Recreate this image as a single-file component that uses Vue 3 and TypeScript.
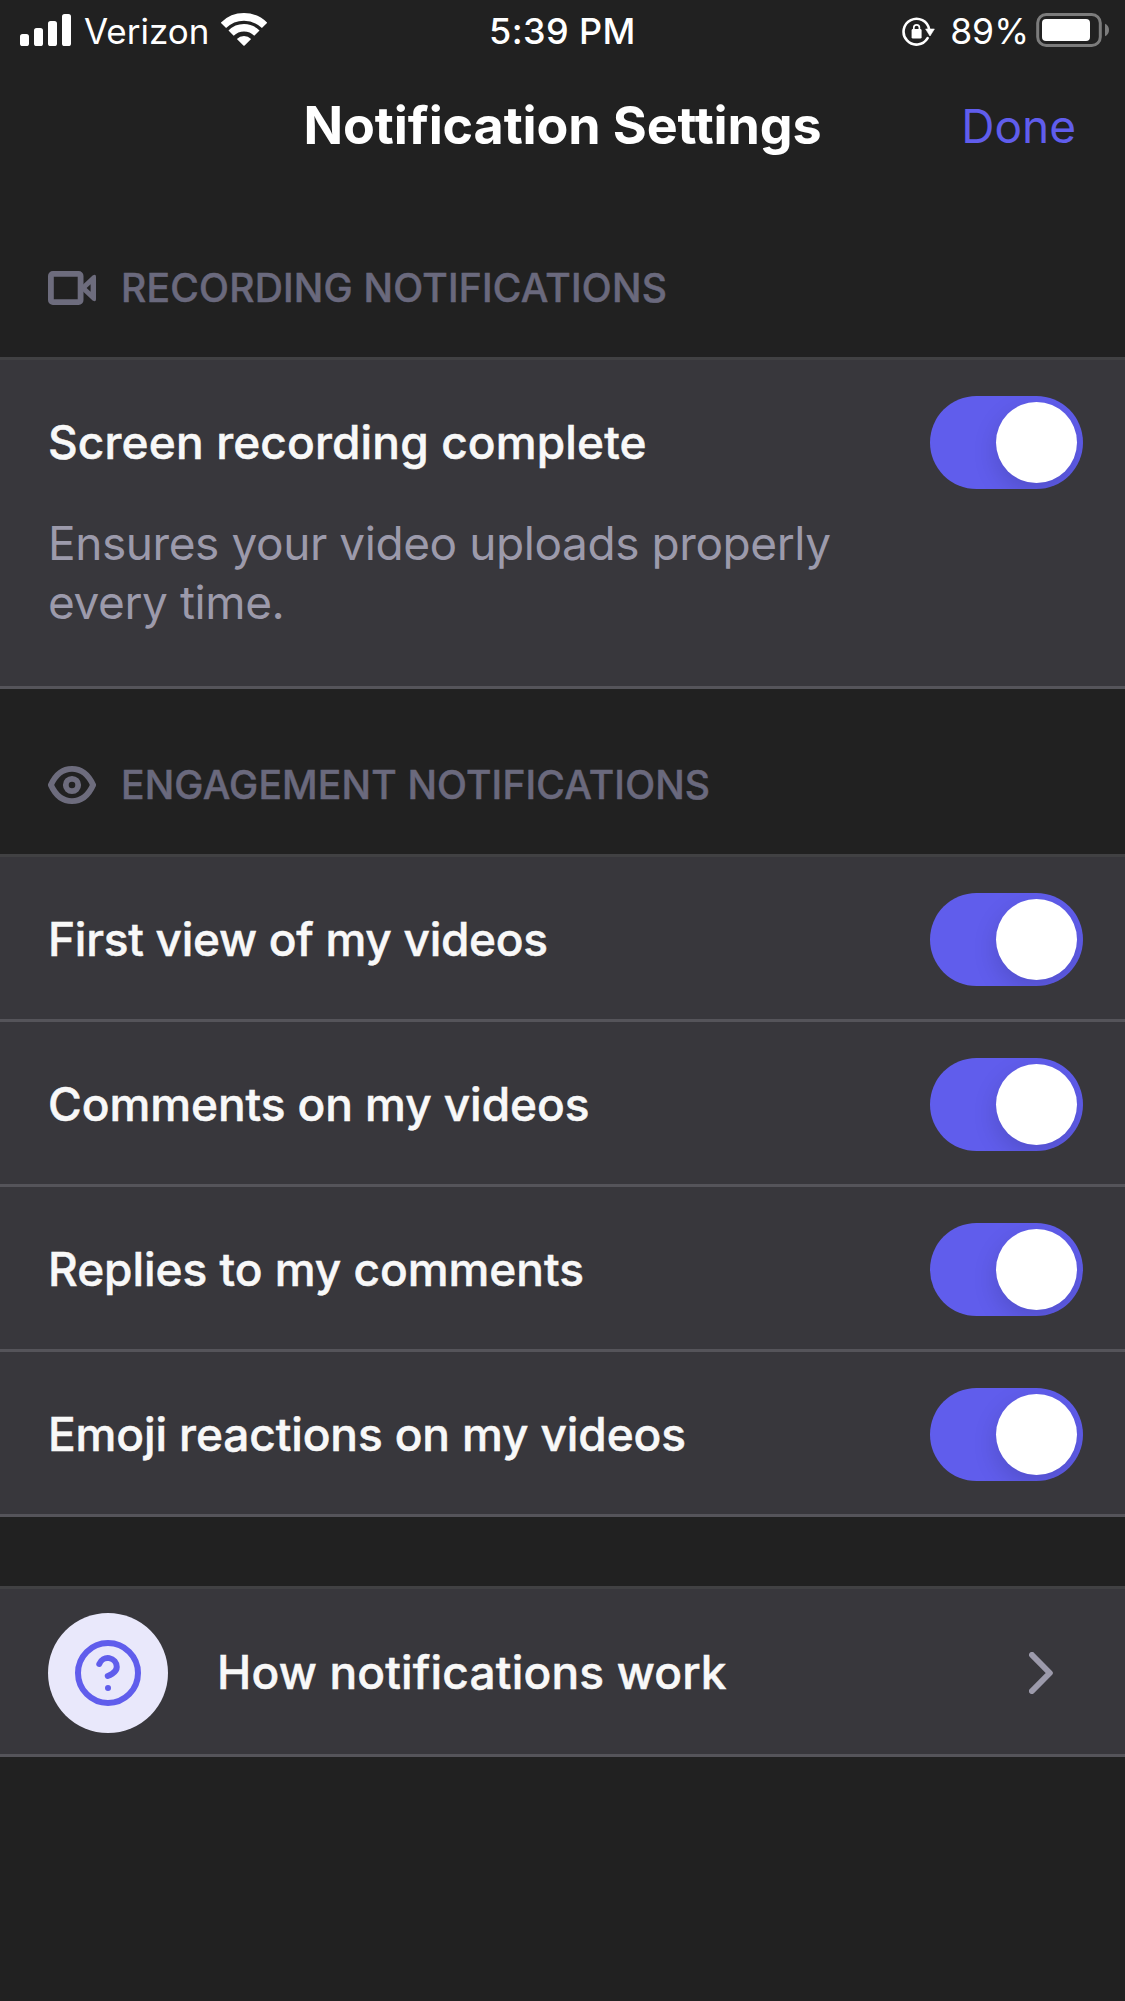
<script setup lang="ts">
import { ref } from 'vue'

interface Setting {
  label: string
  tracking: number
  enabled: boolean
  description?: string
}

interface Section {
  id: 'recording' | 'engagement'
  title: string
  tracking: number
  settings: Setting[]
}

const sections = ref<Section[]>([
  {
    id: 'recording',
    title: 'RECORDING NOTIFICATIONS',
    tracking: 0.22,
    settings: [
      {
        label: 'Screen recording complete',
        tracking: 0.14,
        enabled: true,
        description: 'Ensures your video uploads properly every time.',
      },
    ],
  },
  {
    id: 'engagement',
    title: 'ENGAGEMENT NOTIFICATIONS',
    tracking: 0.17,
    settings: [
      { label: 'First view of my videos', tracking: -0.28, enabled: true },
      { label: 'Comments on my videos', tracking: -0.07, enabled: true },
      { label: 'Replies to my comments', tracking: -0.04, enabled: true },
      { label: 'Emoji reactions on my videos', tracking: -0.12, enabled: true },
    ],
  },
])

const signalBars = [
  { x: 0, height: 12 },
  { x: 14, height: 18 },
  { x: 28, height: 25 },
  { x: 42, height: 32 },
]
</script>

<template>
  <main class="screen">
    <header class="status">
      <div class="status-left">
        <svg class="signal" width="51" height="32" viewBox="0 0 51 32">
          <rect
            v-for="bar in signalBars"
            :key="bar.x"
            :x="bar.x"
            :y="32 - bar.height"
            width="9"
            :height="bar.height"
            rx="2.6"
            fill="#fff"
          />
        </svg>
        <span class="carrier">Verizon</span>
        <svg class="wifi" width="46" height="34" viewBox="0 0 46 34" fill="none">
          <path d="M2.4 12.4A29.2 29.2 0 0 1 43.6 12.4" stroke="#fff" stroke-width="7.6" />
          <path d="M10.1 20.1A18.2 18.2 0 0 1 35.9 20.1" stroke="#fff" stroke-width="7.4" />
          <path d="M15.9 25.9A10 10 0 0 1 30.1 25.9L23.6 32.6Q23 33.1 22.4 32.6Z" fill="#fff" />
        </svg>
      </div>
      <span class="time">5:39 PM</span>
      <div class="status-right">
        <svg class="lock" width="33" height="30" viewBox="0 0 33 30" fill="none">
          <path
            d="M27.2 12.6A12.9 12.9 0 1 0 25.6 21.2"
            stroke="#fff"
            stroke-width="2.6"
            stroke-linecap="round"
          />
          <path d="M23.6 12H32.4L28 19Z" fill="#fff" stroke="#fff" stroke-width=".6" stroke-linejoin="round" />
          <rect x="9.6" y="12" width="10" height="9.6" rx="1.4" fill="#fff" />
          <path d="M11.8 13V10.6a2.8 2.8 0 0 1 5.6 0V13" stroke="#fff" stroke-width="1.7" />
        </svg>
        <span class="percent">89%</span>
        <svg class="battery" width="74" height="34" viewBox="0 0 74 34" fill="none">
          <rect x="1.7" y="1.5" width="62.6" height="31" rx="8.5" stroke="#7c7c7c" stroke-width="3" />
          <rect x="6" y="6" width="48" height="22" rx="4" fill="#fff" />
          <path d="M69 10.8c2.6 1 4 3.4 4 6.2s-1.4 5.2-4 6.2z" fill="#7c7c7c" />
        </svg>
      </div>
    </header>

    <nav class="nav">
      <h1 class="title">Notification Settings</h1>
      <a class="done">Done</a>
    </nav>

    <section v-for="section in sections" :key="section.id">
      <div class="heading">
        <svg v-if="section.id === 'recording'" width="48" height="48" viewBox="0 0 48 48" fill="none">
          <rect x="2.9" y="9.9" width="29.7" height="28.2" rx="2" stroke="#6d6c7d" stroke-width="5.8" />
          <path
            fill="#6d6c7d"
            fill-rule="evenodd"
            d="M34 21.5L44.6 11.6Q48 9.6 48 12.8V35.2Q48 38.4 44.6 36.4L34 26.5ZM38.6 24L42.6 27.8V20.2Z"
          />
        </svg>
        <svg v-else width="48" height="48" viewBox="0 0 48 48" fill="none" stroke="#6d6c7d" stroke-linejoin="round">
          <path
            d="M2.9 24C7.4 14 15 7.9 24 7.9S40.6 14 45.1 24C40.6 34 33 40.1 24 40.1S7.4 34 2.9 24Z"
            stroke-width="5.9"
          />
          <circle cx="24" cy="24" r="6.2" stroke-width="5.8" />
        </svg>
        <h2 class="heading-text" :style="{ letterSpacing: section.tracking + 'px' }">{{ section.title }}</h2>
      </div>

      <div class="card">
        <div
          v-for="setting in section.settings"
          :key="setting.label"
          class="row"
          :class="{ described: setting.description }"
        >
          <div class="row-main">
            <span class="label" :style="{ letterSpacing: setting.tracking + 'px' }">{{ setting.label }}</span>
            <button
              class="toggle"
              :class="{ on: setting.enabled }"
              role="switch"
              :aria-checked="setting.enabled"
              @click="setting.enabled = !setting.enabled"
            >
              <span class="knob"></span>
            </button>
          </div>
          <p v-if="setting.description" class="description">{{ setting.description }}</p>
        </div>
      </div>
    </section>

    <div class="card help">
      <div class="help-row">
        <span class="badge">
          <svg
            width="72"
            height="72"
            viewBox="0 0 24 24"
            fill="none"
            stroke="#605dec"
            stroke-width="2"
            stroke-linecap="round"
            stroke-linejoin="round"
          >
            <circle cx="12" cy="12" r="10" />
            <path d="M9.09 9a3 3 0 0 1 5.83 1c0 2-3 3-3 3" />
            <path d="M12 17h.01" />
          </svg>
        </span>
        <span class="label help-label">How notifications work</span>
        <svg class="chevron" width="24" height="42" viewBox="0 0 24 42" fill="none">
          <path
            d="M3 3L20.8 21L3 39"
            stroke="#9c9aab"
            stroke-width="6"
            stroke-linecap="round"
            stroke-linejoin="round"
          />
        </svg>
      </div>
    </div>
  </main>
</template>

<style>
body {
  background: #212121;
}
</style>

<style scoped>
.screen {
  width: 1125px;
  height: 2001px;
  overflow: hidden;
  background: #212121;
  color: #fff;
  font-family: Inter, 'Liberation Sans', sans-serif;
}

svg {
  display: block;
  flex: none;
}

.status {
  box-sizing: border-box;
  height: 61px;
  padding: 0 15px 0 20px;
  display: grid;
  grid-template-columns: 1fr auto 1fr;
  font-size: 36px;
  line-height: 63px;
  white-space: nowrap;
}

.status-left,
.status-right {
  display: flex;
  align-items: flex-start;
}

.status-right {
  justify-content: flex-end;
}

.signal {
  margin-top: 14px;
}

.carrier {
  margin-left: 13px;
  font-size: 35px;
  font-weight: 400;
}

.wifi {
  margin: 13px 0 0 12px;
}

.time {
  margin-right: 5px;
  font-weight: 500;
  letter-spacing: 0.4px;
}

.lock {
  margin-top: 17px;
}

.percent {
  margin-left: 15px;
  font-size: 35.5px;
  font-weight: 400;
}

.battery {
  margin: 13px 0 0 7px;
}

.nav {
  box-sizing: border-box;
  height: 131px;
  padding: 0 49px 2px;
  display: grid;
  grid-template-columns: 1fr auto 1fr;
  align-items: center;
}

.title {
  grid-column: 2;
  margin: 0;
  font-size: 52px;
  font-weight: 700;
  letter-spacing: -0.12px;
  white-space: nowrap;
}

.done {
  justify-self: end;
  color: #605dec;
  font-size: 46px;
}

.heading {
  box-sizing: border-box;
  height: 165px;
  padding: 72px 48px 0;
  display: flex;
  align-items: flex-start;
  gap: 25px;
}

.heading-text {
  margin: 0;
  color: #6a697d;
  font-size: 39px;
  font-weight: 500;
  line-height: 47px;
  white-space: nowrap;
  -webkit-text-stroke: 0.5px currentColor;
}

.card {
  border-top: 3px solid #414143;
  background: #38373c;
}

.row {
  padding: 36px 42px 33px 48px;
  border-bottom: 3px solid #55545a;
}

.row.described {
  padding-bottom: 54px;
}

.row-main {
  display: flex;
  align-items: center;
  justify-content: space-between;
}

.label {
  padding-bottom: 2px;
  color: #f8f8f8;
  font-size: 46px;
  font-weight: 500;
  line-height: 56px;
  white-space: nowrap;
  -webkit-text-stroke: 0.5px currentColor;
}

.description {
  max-width: 800px;
  margin: 25px 0 0;
  color: #9c9aab;
  font-size: 46px;
  line-height: 59px;
  letter-spacing: -0.43px;
}

.toggle {
  box-sizing: border-box;
  width: 153px;
  height: 93px;
  padding: 6px;
  border: 0;
  border-radius: 47px;
  display: flex;
  justify-content: flex-start;
  overflow: hidden;
  background: #55545a;
}

.toggle.on {
  justify-content: flex-end;
  background: #605dec;
}

.knob {
  width: 81px;
  height: 81px;
  border-radius: 50%;
  background: #fff;
  box-shadow: 0 9px 24px rgba(0, 0, 0, 0.15);
}

.help {
  margin-top: 69px;
  border-bottom: 3px solid #55545a;
}

.help-row {
  height: 120px;
  padding: 24px 72px 21px 48px;
  display: flex;
  align-items: center;
}

.badge {
  width: 120px;
  height: 120px;
  border-radius: 50%;
  display: flex;
  align-items: center;
  justify-content: center;
  flex: none;
  background: #e9e8fb;
}

.help-label {
  margin-left: 49px;
  letter-spacing: 0.18px;
}

.chevron {
  margin-left: auto;
}
</style>
